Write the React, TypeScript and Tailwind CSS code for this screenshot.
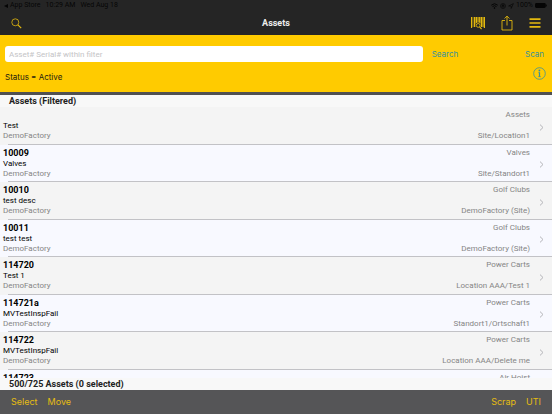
import React, { FC } from 'react';

interface Asset {
    id: string;
    description: string;
    site: string;
    type: string;
    location: string;
}

const assets: Asset[] = [
    { id: '', description: 'Test', site: 'DemoFactory', type: 'Assets', location: 'Site/Location1' },
    { id: '10009', description: 'Valves', site: 'DemoFactory', type: 'Valves', location: 'Site/Standort1' },
    { id: '10010', description: 'test desc', site: 'DemoFactory', type: 'Golf Clubs', location: 'DemoFactory (Site)' },
    { id: '10011', description: 'test test', site: 'DemoFactory', type: 'Golf Clubs', location: 'DemoFactory (Site)' },
    { id: '114720', description: 'Test 1', site: 'DemoFactory', type: 'Power Carts', location: 'Location AAA/Test 1' },
    { id: '114721a', description: 'MVTestInspFail', site: 'DemoFactory', type: 'Power Carts', location: 'Standort1/Ortschaft1' },
    { id: '114722', description: 'MVTestInspFail', site: 'DemoFactory', type: 'Power Carts', location: 'Location AAA/Delete me' },
    { id: '114723', description: '', site: '', type: 'Air Hoist', location: '' },
];

const SearchIcon: FC = () => (
    <svg className="w-[11px] h-[11px]" viewBox="0 0 11 11" fill="none" stroke="currentColor">
        <circle cx="4.3" cy="4.3" r="3.5" strokeWidth="0.8" />
        <path d="M6.9 6.9 10.2 10.2" strokeWidth="1.2" />
    </svg>
);

const BarcodeIcon: FC = () => (
    <svg className="w-[14px] h-[14px]" viewBox="0 0 14 14" fill="none" stroke="currentColor">
        <path d="M0 1H14V11H0Z" fill="#8a7316" stroke="none" />
        <path d="M0.6 1V12M13.4 1V12" strokeWidth="1.2" />
        <path d="M3.5 1V11M10.5 1V11" strokeWidth="1" />
        <path d="M5.5 1V8M8.3 1V7" strokeWidth="1" />
        <path d="M2 1V12" strokeWidth="0.8" stroke="#252525" />
        <circle cx="7.2" cy="9.4" r="2.8" fill="#252525" stroke="none" />
        <circle cx="7.2" cy="9.4" r="1.9" strokeWidth="0.9" />
        <path d="M8.6 10.8 10.6 13.2" strokeWidth="1.2" />
    </svg>
);

const ShareIcon: FC = () => (
    <svg className="w-[12px] h-[16px]" viewBox="0 0 12 16" fill="none" stroke="currentColor" strokeWidth="0.9">
        <path d="M4 5.5H1V15H11V5.5H8" />
        <path d="M6 10.5V1.2M3.6 3.5 6 1.1 8.4 3.5" />
    </svg>
);

const MenuIcon: FC = () => (
    <svg className="w-[12px] h-[10px]" viewBox="0 0 12 10" stroke="currentColor" strokeWidth="1.7">
        <path d="M0.5 1.2H11.5M0.5 5H11.5M0.5 8.8H11.5" />
    </svg>
);

const InfoIcon: FC = () => (
    <svg className="w-[13px] h-[13px]" viewBox="0 0 13 13" fill="none" stroke="currentColor">
        <circle cx="6.5" cy="6.5" r="5.8" strokeWidth="0.8" />
        <path d="M6.5 5.3V9.8" strokeWidth="1.2" />
        <path d="M5.3 5.6H6.5M5.2 9.6H7.8" strokeWidth="0.7" />
        <circle cx="6.4" cy="3.5" r="0.9" fill="currentColor" stroke="none" />
    </svg>
);

const ChevronIcon: FC = () => (
    <svg className="w-[5px] h-[7px]" viewBox="0 0 5 7" fill="none" stroke="currentColor" strokeWidth="1">
        <path d="M1 0.6 4 3.5 1 6.4" />
    </svg>
);

const StatusBar: FC = () => (
    <div className="flex items-center justify-between h-[11px] pl-1 pr-[5px] text-[7px] leading-[11px] text-[#050505]">
        <div className="flex items-center gap-[5px]">
            <span className="flex items-center gap-[2px]">
                <svg className="w-[4px] h-[4px]" viewBox="0 0 4 4" fill="currentColor"><path d="M0 2 4 0V4Z" /></svg>
                App Store
            </span>
            <span>10:29 AM</span>
            <span>Wed Aug 18</span>
        </div>
        <div className="flex items-center gap-[2px]">
            <svg className="w-[7px] h-[6px]" viewBox="0 0 7 6" fill="none" stroke="currentColor" strokeWidth="1">
                <path d="M0.3 2.2Q3.5 -0.8 6.7 2.2M1.5 3.6Q3.5 1.8 5.5 3.6" />
                <circle cx="3.5" cy="5" r="0.5" />
            </svg>
            <svg className="w-[6px] h-[6px]" viewBox="0 0 6 6" fill="none" stroke="currentColor" strokeWidth="0.6">
                <circle cx="3" cy="3" r="2.5" />
                <path d="M2 2.7H4V4H2ZM2.3 2.7V1.8H3.7V2.7" />
            </svg>
            <svg className="w-[6px] h-[6px]" viewBox="0 0 6 6" fill="none" stroke="currentColor" strokeWidth="0.6">
                <path d="M0.6 3 5.4 0.6 3.2 5.4V3Z" />
            </svg>
            <span>100%</span>
            <svg className="w-[12px] h-[5px]" viewBox="0 0 12 5" fill="currentColor">
                <rect width="10.8" height="5" rx="1.4" />
                <rect x="11.2" y="1.6" width="0.8" height="1.8" />
            </svg>
        </div>
    </div>
);

const AssetRow: FC<{ asset: Asset }> = ({ asset }) => (
    <li className="flex flex-col shrink-0 h-[38px] even:h-[37px] bg-[#f4f4f4] even:bg-[#f8f9ff]">
        <div className="flex flex-1 items-center pt-[3px] pl-[3px] pr-[8px] text-[8px] leading-[10px]">
            <div className="flex flex-col flex-1 h-full">
                <span className="min-h-[11px] text-[9px] leading-[11px] font-bold text-black">{asset.id}</span>
                <span className="min-h-[10px] text-black">{asset.description}</span>
                <span className="text-[#858585]">{asset.site}</span>
            </div>
            <div className="flex flex-col justify-between h-[31px] self-start text-right text-[#858585]">
                <span>{asset.type}</span>
                <span>{asset.location}</span>
            </div>
            <span className="ml-[9px] text-[#b4b4b8]"><ChevronIcon /></span>
        </div>
        <div className="h-px ml-2 bg-[#c2c2c6]" />
    </li>
);

const App: FC = () => {
    return (
        <div className="flex flex-col h-screen overflow-hidden bg-[#f4f4f4] font-['Roboto','Liberation_Sans',sans-serif]">
            <header className="bg-[#252525]">
                <StatusBar />
                <div className="grid grid-cols-3 items-center h-[24px] pl-[11px] pr-[11px] text-[#e3b90f]">
                    <button aria-label="Find" className="justify-self-start"><SearchIcon /></button>
                    <h1 className="text-center text-[9px] leading-[12px] font-bold text-[#ededed]">Assets</h1>
                    <div className="flex items-center justify-end gap-[16px]">
                        <button aria-label="Scan barcode"><BarcodeIcon /></button>
                        <button aria-label="Share"><ShareIcon /></button>
                        <button aria-label="Menu"><MenuIcon /></button>
                    </div>
                </div>
            </header>

            <section className="flex flex-col pt-[11px] pb-[7px] bg-[#ffcb00] border-b-[3px] border-[#505052] font-['Inter','Liberation_Sans',sans-serif]">
                <form className="flex items-center pl-[5px] pr-[8px] text-[8px] leading-[12px]">
                    <input
                        type="text"
                        aria-label="Asset# Serial# within filter"
                        placeholder="Asset# Serial# within filter"
                        className="w-[77.5%] h-[16px] px-[4px] rounded-[3px] bg-white text-black font-['Roboto','Liberation_Sans',sans-serif] placeholder:text-[#c4c4c6]"
                    />
                    <button type="button" className="ml-[9px] text-[#3a8f9c]">Search</button>
                    <button type="button" className="ml-auto text-[#3a8f9c]">Scan</button>
                </form>
                <div className="flex items-center justify-between h-[23px] pl-[5px] pr-[6px]">
                    <p className="pt-[6px] text-[8px] leading-[12px] text-[#1c1a10]">Status = Active</p>
                    <button aria-label="Filter info" className="text-[#3a8f9c]"><InfoIcon /></button>
                </div>
            </section>

            <h2 className="pl-[9px] text-[9px] leading-[12px] font-bold text-[#222] bg-[#f8f8f8]">Assets (Filtered)</h2>

            <ul className="flex flex-col flex-1 min-h-0 overflow-hidden">
                {assets.map((asset) => <AssetRow key={asset.description + asset.id} asset={asset} />)}
            </ul>

            <p className="pl-[9px] text-[9px] leading-[12px] font-bold text-[#222] bg-[#f8f8f8]">500/725 Assets (0 selected)</p>

            <footer className="flex items-center justify-between h-[24px] pl-[11px] pr-[11px] text-[9px] leading-[12px] text-[#e5bd12] bg-[#555557] font-['Inter','Liberation_Sans',sans-serif]">
                <div className="flex gap-[10px]">
                    <button>Select</button>
                    <button>Move</button>
                </div>
                <div className="flex gap-[10px]">
                    <button>Scrap</button>
                    <button>UTI</button>
                </div>
            </footer>
        </div>
    );
};

export default App;
